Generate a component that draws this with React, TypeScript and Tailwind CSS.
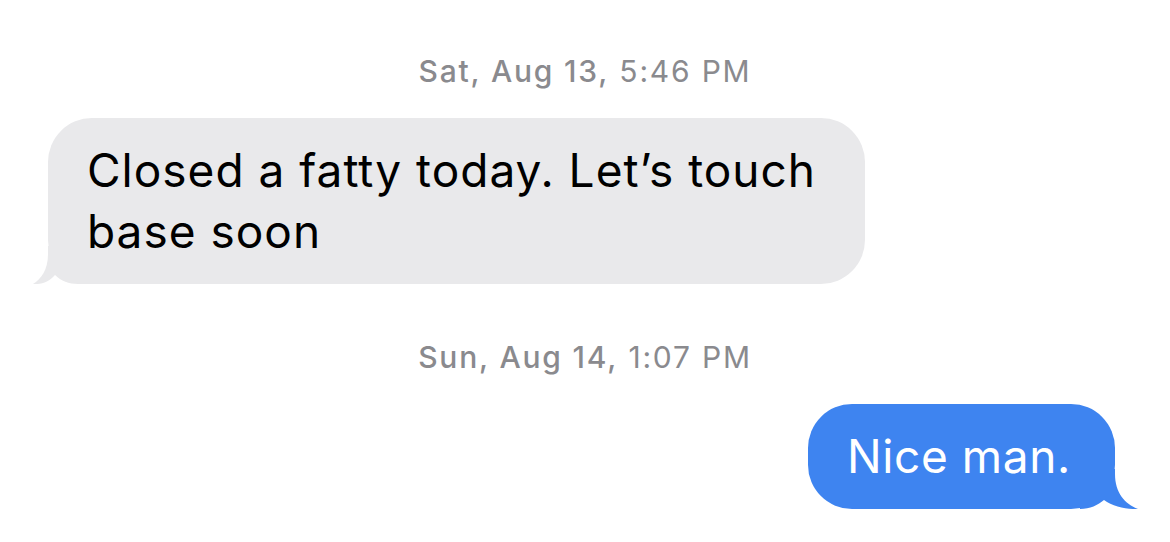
import React from 'react'

const FONT = "font-['Inter','Liberation_Sans',sans-serif]"

function Stamp({ day, time, className = '' }: { day: string; time: string; className?: string }) {
  return (
    <div className={`text-center text-[30px] leading-[36px] tracking-[1.8px] text-[#8a8a8e] ${className}`}>
      <span className="font-medium">{day}</span> {time}
    </div>
  )
}

function Incoming({ children }: { children: React.ReactNode }) {
  return (
    <div className="relative ml-[48px] mt-[29px] w-[817px] rounded-[44px] bg-[#e9e9eb] py-[22px] pl-[39px] pr-[30px] text-[46px] leading-[61px] tracking-[1px] text-black">
      {/* tail */}
      <svg className="absolute bottom-0 left-[-16px]" width="60" height="38" viewBox="0 0 60 38">
        <path d="M16,0 L16,8 C16,24 9,33 1,38 C10,38.5 17,36 23,29 C29,35 37,38 46,38 L60,38 L60,0 Z" fill="#e9e9eb" />
      </svg>
      <span className="relative">{children}</span>
    </div>
  )
}

function Outgoing({ children }: { children: React.ReactNode }) {
  return (
    <div className="flex justify-end pr-[55px]">
      <div className="relative mt-[29px] w-[307px] rounded-[44px] bg-[#3e84f0] py-[22px] pl-[39px] text-[46px] leading-[61px] tracking-[0.6px] text-white">
        <svg className="absolute bottom-0 right-[-25px]" width="60" height="40" viewBox="0 0 60 40">
          <path d="M0,0 L35,0 L35,5 C35,24 45,35 58,40 C48,40.5 33,38 24,31 C18,36 10,40 0,40 Z" fill="#3e84f0" />
        </svg>
        <span className="relative">{children}</span>
      </div>
    </div>
  )
}

export default function App() {
  return (
    <div className={`h-[542px] w-[1170px] overflow-hidden bg-white pt-[53px] ${FONT}`}>
      <Stamp day="Sat, Aug 13," time="5:46 PM" />
      <Incoming>Closed a fatty today. Let’s touch base soon</Incoming>
      <Stamp day="Sun, Aug 14," time="1:07 PM" className="mt-[55px]" />
      <Outgoing>Nice man.</Outgoing>
    </div>
  )
}
